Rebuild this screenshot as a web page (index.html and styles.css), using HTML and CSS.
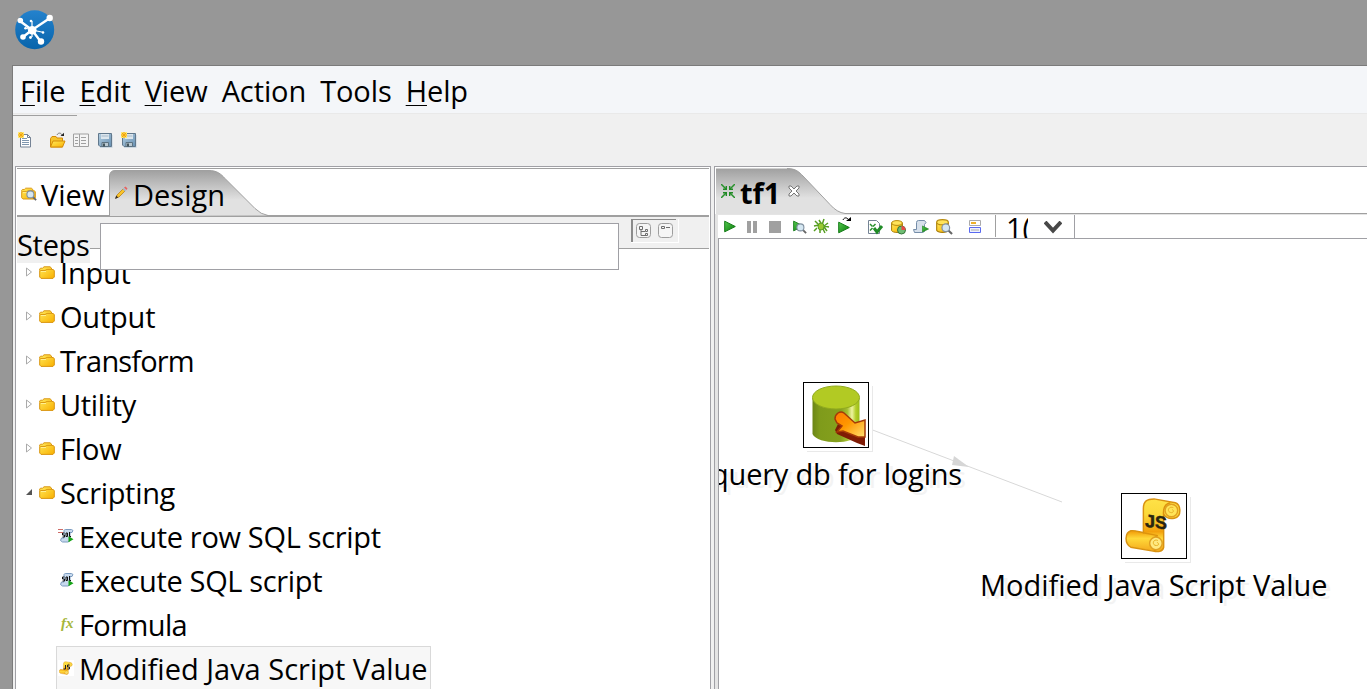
FILE: index.html
```html
<!DOCTYPE html>
<html lang="en">
<head>
<meta charset="utf-8">
<title>tf1</title>
<link rel="stylesheet" href="styles.css">
</head>
<body>
<svg class="defs" width="0" height="0">
  <defs>
    <linearGradient id="gold" x1="0" y1="0" x2="1" y2="1"><stop offset="0" stop-color="#ffe95a"/><stop offset="1" stop-color="#f9b000"/></linearGradient>
    <linearGradient id="green" x1="0" y1="0" x2="1" y2="1"><stop offset="0" stop-color="#55c94f"/><stop offset="1" stop-color="#087a0a"/></linearGradient>
    <linearGradient id="tab" x1="0" y1="0" x2="0" y2="1"><stop offset="0" stop-color="#a0a0a0"/><stop offset=".65" stop-color="#e1e1e1"/><stop offset="1" stop-color="#e1e1e1"/></linearGradient>
    <linearGradient id="barrel" x1="0" y1="0" x2="1" y2="0"><stop offset="0" stop-color="#6c8616"/><stop offset=".15" stop-color="#7f9b1b"/><stop offset=".6" stop-color="#85a01d"/><stop offset=".74" stop-color="#a5bf30"/><stop offset=".84" stop-color="#eef3a0"/><stop offset=".92" stop-color="#b3cf2a"/><stop offset="1" stop-color="#9aba17"/></linearGradient>
    <linearGradient id="fire" x1="0" y1="0" x2="1" y2="1"><stop offset="0" stop-color="#ff7800"/><stop offset=".45" stop-color="#ff9800"/><stop offset="1" stop-color="#ffe070"/></linearGradient>
    <linearGradient id="paper" x1="0" y1="0" x2="0" y2="1"><stop offset="0" stop-color="#ffe247"/><stop offset=".3" stop-color="#fbd93a"/><stop offset=".62" stop-color="#f3a00c"/><stop offset=".75" stop-color="#ffd93a"/><stop offset="1" stop-color="#f3a81c"/></linearGradient>
    <linearGradient id="blue" x1="0" y1="0" x2="0" y2="1"><stop offset="0" stop-color="#2482cd"/><stop offset="1" stop-color="#0864ab"/></linearGradient>
    <linearGradient id="steel" x1="0" y1="0" x2="1" y2="1"><stop offset="0" stop-color="#b4cfe2"/><stop offset="1" stop-color="#6790b2"/></linearGradient>
    <symbol id="folder" viewBox="0 0 16 13"><path d="M.7 4.500V3L1.500 2.200H3.500L5 .800H11L12.500 2V3.500H14L15.300 4.500V11l-1.300 1.400H2L.7 11Z" fill="url(#gold)" stroke="#d99511"/><path d="M1.300 4.500H6L8 3.400H12.500" fill="none" stroke="#dc9b12"/><path d="M2 5.500h5" stroke="#fff092"/></symbol>
    <symbol id="lens" viewBox="0 0 10 10"><path d="m6.200 6.200 3 3" stroke="#666" stroke-width="1.700"/><circle cx="4" cy="4" r="3.200" fill="#d5e7f2" stroke="#8090a0"/></symbol>
    <symbol id="play" viewBox="0 0 12 12"><path d="M.7.700v10.600L11.300 6Z" fill="url(#green)" stroke="#147c17"/></symbol>
    <symbol id="disk" viewBox="0 0 15 15"><path d="M2 2h12.500v12.800H2z" fill="#c4d2df"/><path d="M.5.500h13v13H2L.5 12Z" fill="url(#steel)" stroke="#61788c"/><path d="M3 1h8v5H3z" fill="#dce6ed"/><path d="M3.500 3h7" stroke="#a5b8c8"/><path d="M4 9.500h6.500v4H4z" fill="#b9c8d1" stroke="#5c7281"/><path d="M5 10.500h2v3H5z" fill="#44565e"/></symbol>
    <symbol id="spark" viewBox="0 0 6 6"><path d="M0 0h6v6H0z" fill="#ffe873"/><path d="M3 0v6M0 3h6M1 1l4 4M5 1 1 5" stroke="#f2a50c"/></symbol>
    <symbol id="barrelsm" viewBox="0 0 12 13"><path d="M.6 3v7.500c1 2.600 9.800 2.600 10.800 0V3Z" fill="url(#gold)" stroke="#a77b08"/><ellipse cx="6" cy="3" rx="5.400" ry="2.400" fill="#ffe45a" stroke="#b78a0c"/></symbol>
    <symbol id="sql" viewBox="0 0 16 14"><path d="M6 1.500C6.500.500 7 .500 8 .500h5.500l1.500 1-1 2h-2v8l-2 1.500H4.500L2.500 11.500 3.500 9H6Z" fill="#c7d9ed" stroke="#7c9cc0"/><path d="M6.500 4h-2v2h2v2h-2M8 4h1.500v3.500H8Zm3.500-1v4.500H13" fill="none" stroke="#111"/><path d="M10.500 7.300v6L15.500 10.300Z" fill="#15a315"/></symbol>
    <symbol id="scroll" viewBox="0 0 60 60"><path d="M19 13c0-8 4-10 11-10l22 4c6 2 7 15-1 16-5 1-9-1-11-4v34c-1 5-6 5-11 4L6 53C-1 49 0 38 6 36c3-1 8 1 13 2Z" fill="url(#paper)" stroke="#d99211" stroke-width="1.500"/><path d="M19 38 34 41M40 20c-1-9 2-12 7-13M34 41c-8 3-7 13-2 16" fill="none" stroke="#dd930c" stroke-width="1.500"/><circle cx="48" cy="15" r="6.500" fill="#ffe458" stroke="#e0a021" stroke-width="1.500"/><path d="M50 12c-5-2-7 4-3 5 3 1 4-2 2-3" fill="none" stroke="#e5ad22"/><circle cx="32" cy="49" r="6.500" fill="#ffe980" stroke="#e0a021" stroke-width="1.500"/><path d="M34 46c-5-2-6 4-3 5 4 1 5-2 2-3" fill="none" stroke="#e5ad22"/></symbol>
  </defs>
</svg>
<header class="title"><svg class="logo" width="42" height="42" viewBox="0 0 42 42"><circle cx="20.700" cy="20.700" r="19.500" fill="url(#blue)"/><path d="M6 12 18 21 36 9M18 21 9 28M18 21l9 12" fill="none" stroke="#fff" stroke-width="2.400"/><path d="M18 21V12M18 21v7M18 21l12 2.500M18 21l-7-2" stroke="#fff" stroke-width="1.200"/><g fill="#fff"><circle cx="6.300" cy="11.500" r="2.800"/><circle cx="35.700" cy="9" r="3.200"/><circle cx="9" cy="28" r="2.800"/><circle cx="27" cy="32.500" r="3.200"/><circle cx="18.300" cy="21.300" r="4.300"/><circle cx="17" cy="12" r="1.300"/><circle cx="16.500" cy="28.500" r="1.400"/><circle cx="29" cy="23.500" r="1.300"/><circle cx="11.500" cy="19.300" r="1.300"/></g></svg></header>
<main class="window">
  <nav class="menu"><span><u>F</u>ile</span><span><u>E</u>dit</span><span><u>V</u>iew</span><span>Action</span><span>Tools</span><span><u>H</u>elp</span></nav>
  <div class="rule"></div>
  <div class="toolbar">
    <svg width="16" height="16"><path d="M2.500 2.500h7l3 3v9.500h-10z" fill="#fff" stroke="#758395"/><path d="M9.500 2.500v3h3" fill="none" stroke="#758395"/><path d="M4 6.500h5M4 8.500h7M4 10.500h7M4 12.500h7" stroke="#7f97af"/><use href="#spark" width="6" height="6"/></svg>
    <svg class="open" width="17" height="16"><path d="M1.500 6.500 3 4.500h4l1 1.500h5.500v9h-12Z" fill="#f6c52d" stroke="#d58b09"/><path d="M4 9h12l-2.500 6H1.500Z" fill="url(#gold)" stroke="#d58b09"/><path d="M8 3c1-2.500 4-2.500 5 0" fill="none" stroke="#777"/><path d="M11.500 4H15V.800z" fill="#222"/></svg>
    <svg width="16" height="16"><path d="M.5 2h15v12.500H.5zM6.500 2v12M2 5.500h3M2 8.500h3M2 11.500h3M8 5.500h5M8 8.500h5M8 11.500h5" fill="#f4f4f4" stroke="#a0a0a0"/></svg>
    <svg width="16" height="16"><use href="#disk" x="1" y="1" width="15" height="15"/></svg>
    <svg width="16" height="16"><use href="#disk" x="1" y="1" width="15" height="15"/><use href="#spark" width="6" height="6"/></svg>
  </div>
  <div class="panes">
    <section class="left">
      <div class="tabs">
        <svg class="tabshape" width="162" height="46"><path d="M.5 46V6Q1 .500 6 .500H100C108 .500 112 4 116 8.500L146 38.500Q152 44.500 159 45.500H162" fill="url(#tab)" stroke="#a0a0a0"/></svg>
        <span class="tab view"><svg width="16" height="16"><use href="#folder" y="1" width="15" height="13"/><use href="#lens" x="5" y="4" width="11" height="11"/></svg><b>View</b></span>
        <span class="tab design"><svg width="14" height="14"><path d="m2 12 1-3 6-6 2 2-6 6Z" fill="#f9c42a" stroke="#b98219" stroke-width=".8"/><path d="m1 13 1.200-3.500 2 2Z" fill="#332b24"/><path d="m8.500 3 2.500 2.500 1.200-1.200L9.700 1.800Z" fill="#a9b8c8"/><path d="m10 1.500 2.500 2.500 1-1.500L11.500.500Z" fill="#e8625f"/></svg><b>Design</b></span>
      </div>
      <div class="filter"><span class="steps">Steps</span><span class="dash"></span><span class="search"></span>
        <span class="modes"><svg width="45" height="24"><path d="M0 .500h45M.500 23V0M1.500 23V1" fill="none" stroke="#8b8b8b"/><g fill="#f5f5f5" stroke="#9d9d9d"><rect x="5.500" y="4.500" width="14" height="14" rx="3"/><rect x="27.500" y="4.500" width="14" height="14" rx="3"/></g><path d="M8.500 7.500h3v3h-3zM10 11v5.500h5M10 12.500h4M14.500 10.500h2v2h-2zM14.500 14.500h2v2h-2zM30.500 7.500h3v2h-3zM35 8.500h4" fill="none" stroke="#6e6e6e"/></svg></span>
      </div>
      <div class="tree">
        <div class="row"><svg class="arrow" width="7" height="10"><path d="M.5 1v8l5-4Z" fill="#fff" stroke="#aaa"/></svg><svg class="fold" width="16" height="13"><use href="#folder"/></svg><span class="t1">Input</span></div>
        <div class="row"><svg class="arrow" width="7" height="10"><path d="M.5 1v8l5-4Z" fill="#fff" stroke="#aaa"/></svg><svg class="fold" width="16" height="13"><use href="#folder"/></svg><span class="t2">Output</span></div>
        <div class="row"><svg class="arrow" width="7" height="10"><path d="M.5 1v8l5-4Z" fill="#fff" stroke="#aaa"/></svg><svg class="fold" width="16" height="13"><use href="#folder"/></svg><span class="t3">Transform</span></div>
        <div class="row"><svg class="arrow" width="7" height="10"><path d="M.5 1v8l5-4Z" fill="#fff" stroke="#aaa"/></svg><svg class="fold" width="16" height="13"><use href="#folder"/></svg><span class="t4">Utility</span></div>
        <div class="row"><svg class="arrow" width="7" height="10"><path d="M.5 1v8l5-4Z" fill="#fff" stroke="#aaa"/></svg><svg class="fold" width="16" height="13"><use href="#folder"/></svg><span class="t5">Flow</span></div>
        <div class="row"><svg class="arrow" width="7" height="10"><path d="M0 8h6V2Z" fill="#555"/></svg><svg class="fold" width="16" height="13"><use href="#folder"/></svg><span class="t6">Scripting</span></div>
        <div class="row leaf"><svg width="16" height="16"><use href="#sql" y="1" width="16" height="14"/><path d="M0 1.500h5M0 4.500h5" stroke="#cf6c68"/></svg><span class="t7">Execute row SQL script</span></div>
        <div class="row leaf"><svg width="16" height="16"><use href="#sql" y="1" width="16" height="14"/></svg><span class="t8">Execute SQL script</span></div>
        <div class="row leaf"><svg width="16" height="16"><text class="fx" x="3" y="12">fx</text></svg><span class="t9">Formula</span></div>
        <div class="row leaf selected"><svg width="16" height="16"><path d="M0 0h16v16H0z" fill="#fff"/><use href="#scroll" x="1" y="1" width="14" height="14"/><path d="M7.500 5v4H5.500M11.500 5h-2v2h2v2h-2" fill="none" stroke="#222"/></svg><span class="t10">Modified Java Script Value</span></div>
      </div>
    </section>
    <section class="right">
      <div class="filetab"><svg class="fileshape" width="651" height="47"><path d="M0 46V.500H71C80 .500 83 4 87 8L114 36.500Q121 44.500 129 45.500H651" fill="url(#tab)"/><path d="M71 .500C80 .500 83 4 87 8L114 36.500Q121 44.500 129 45.500H651" fill="none" stroke="#a0a0a0"/></svg>
        <svg class="merge" width="14" height="14"><path d="m0 0 5 5M14 0 9 5M0 14l5-5M14 14 9 9" stroke="#28912c" stroke-width="1.500"/><path d="M5.300 2v3.300H2M8.700 2v3.300H12M5.300 12V8.700H2M8.700 12V8.700H12" fill="none" stroke="#228a26" stroke-width="1.400"/></svg><strong>tf1</strong><svg class="close" width="12" height="12"><path d="M1 1h2l3 3 3-3h2v2L8 6l3 3v2H9L6 8l-3 3H1V9l3-3-3-3Z" fill="#fff" stroke="#777"/></svg></div>
      <div class="runbar">
        <svg width="339" height="23">
          <use href="#play" x="6" y="5" width="12" height="13"/>
          <path d="M29 6h4v12h-4zm6 0h4v12h-4zM51 6h12v12H51z" fill="#a0a0a0"/>
          <use href="#play" x="75" y="5" width="11" height="12"/><use href="#lens" x="78" y="8" width="11" height="11"/>
          <path d="m97 6 4 4-5 1m14-3-4 3 5 1m-10-7 3 5 2-6m-7 9-3 3m10-4 3 4m-7-4v6m2-6 3 6" fill="none" stroke="#579e22" stroke-width="1.500"/><ellipse cx="103" cy="11.500" rx="3" ry="3.500" fill="#9ac832" stroke="#579e22"/>
          <use href="#play" x="120" y="6" width="12" height="13"/><path d="M125 5c1-3 5-3 6 1" fill="none" stroke="#111"/><path d="M128 6h5V2Z"/>
          <path d="M150.500 5.500h8l3 3v10h-11z" fill="#fff" stroke="#758395"/><path d="m152 9 2.500 2.500m3-2.500L155 11.500m-3 4 2.500-2.500" stroke="#28912c" stroke-width="1.500"/><path d="m156 13 3 4 5-6" fill="none" stroke="#218c27" stroke-width="3"/>
          <use href="#barrelsm" x="173" y="5" width="12" height="13"/><circle cx="183.500" cy="15" r="4" fill="#6fbd74" stroke="#36753a"/><path d="M183.500 15v-4a4 4 0 0 1 4 4Z" fill="#e84848"/>
          <path d="M198.500 7.500q0-2 2-2h6l1.500 2-1.500 2v7l-2 1h-8l-1-3h3Z" fill="#d7e0eb" stroke="#758da9"/><use href="#play" x="204" y="9" width="7" height="10"/>
          <use href="#barrelsm" x="218" y="4" width="13" height="14"/><use href="#lens" x="223" y="8" width="12" height="12"/>
          <path d="M251.500 5.500h11v5h-11z" fill="#fff" stroke="#aaa"/><path d="M253 8h5" stroke="#efb12b" stroke-width="2"/><path d="M251.500 12.500h11v5h-11z" fill="#eef2ff" stroke="#5969f0"/><path d="M253 15h8" stroke="#aaa"/>
          <path d="M277.500 0v22" stroke="#a0a0a0"/>
        </svg>
        <span class="zoom">1(</span><svg class="chev" width="18" height="14"><path d="m1 1 8 8.500L17 1" fill="none" stroke="#484848" stroke-width="4"/></svg>
      </div>
      <div class="canvas">
        <svg class="hop" width="200" height="80"><path d="M0 0 192 73" stroke="#d8d8d8"/><path d="m82 36 2-9 15 11Z" fill="#d6d6d6"/></svg>
        <div class="node db"><svg width="64" height="64" viewBox="0 0 64 64"><path d="M8.500 15v36c5 11 42 11 47 0V15Z" fill="url(#barrel)"/><ellipse cx="32" cy="14.500" rx="23.500" ry="11.500" fill="#b2ca23" stroke="#91aa1f"/><path d="M31 47 34 41 56 50 61 47V63L53 60 33 51Z" fill="#7f1b05"/><path d="M31 36c0-5 5-9 9-6l11 10 10-3v17l-7 0-15-6-6 1 5-6-5-3Z" fill="url(#fire)" stroke="#a53a07" stroke-width="1.500"/></svg></div>
        <span class="label dblabel">query db for logins</span>
        <div class="node js"><svg width="64" height="64"><use href="#scroll" x="3" y="2" width="58" height="58"/></svg><span class="jstext">JS</span></div>
        <span class="label jslabel">Modified Java Script Value</span>
      </div>
    </section>
  </div>
</main>
</body>
</html>
```
FILE: styles.css
```css
* { box-sizing: border-box; }
body { margin: 0; width: 1367px; height: 689px; overflow: hidden; background: #979797; color: #000; font: 29px/44px "Open Sans", sans-serif; display: flex; flex-direction: column; }
svg { display: block; flex: none; }
.defs { position: absolute; }
span, b { white-space: nowrap; }
.title { height: 65px; flex: none; padding: 9px 0 0 14px; }
.window { flex: 1; min-height: 0; margin-left: 12px; border-left: 1px solid #7b7b7b; border-top: 1px solid #7b7b7b; background: #f0f0f0; display: flex; flex-direction: column; }
.menu { height: 48px; flex: none; background: #f4f6f9; border-bottom: 1px solid #e9e9e9; padding: 3px 0 0 7px; display: flex; gap: 14px; letter-spacing: -.1px; }
.menu u { text-decoration-thickness: 1px; text-underline-offset: 3px; }
.rule { width: 64px; height: 3px; flex: none; border-bottom: 1px solid #a0a0a0; margin-top: -1px; }
.toolbar { height: 50px; flex: none; display: flex; gap: 8px; padding: 16px 0 0 5px; }
.open { margin-left: 7px; margin-right: -1px; }
.panes { flex: 1; min-height: 0; display: flex; gap: 3px; padding-left: 2px; }
.left { width: 696px; flex: none; border: solid #a0a0a5; border-width: 1px 1px 0; background: #fff; display: flex; flex-direction: column; padding: 1px 1px 0; }
.tabs { height: 49px; flex: none; border-top: 1px solid #a0a0a0; border-bottom: 2px solid #a0a0a0; position: relative; display: flex; }
.tabshape { position: absolute; left: 92px; top: 1px; }
.tab { position: relative; display: flex; padding-top: 4px; }
.tab b { font-weight: 400; }
.tab svg { margin-top: 13px; }
.view { padding-left: 4px; width: 97px; gap: 4px; }
.design { gap: 5px; }
.design svg { margin-top: 13px; }
.filter { height: 32px; flex: none; background: #f0f0f0; border-bottom: 1px solid #a0a0a0; display: flex; position: relative; z-index: 1; }
.steps { width: 73px; height: 46px; background: #f0f0f0; padding-top: 6px; letter-spacing: -.3px; }
.dash { width: 10px; }
.search { width: 519px; height: 47px; margin-top: 6px; background: #fff; border: 1px solid #a0a0a5; }
.modes { margin: 2px 0 0 12px; width: 48px; height: 24px; border: solid #fff; border-width: 0 1px 1px 0; }
.tree { flex: 1; min-height: 0; overflow: hidden; margin-top: 1px; padding-top: 1px; }
.row { height: 44px; display: flex; padding-left: 9px; }
.arrow { margin: 16px 6px 0 0; }
.fold { margin: 15px 5px 0 0; }
.leaf { margin-left: 39px; padding-left: 2px; }
.leaf svg { margin: 13px 5px 0 0; }
.selected { width: 375px; height: 46px; margin-top: -1px; border: 1px solid #d9d9d9; padding-left: 1px; background: #f7f7f7; }
.selected svg { margin-top: 13px; }
.t1, .t2, .t5 { letter-spacing: -.2px; }
.t3 { letter-spacing: -.85px; }
.t4, .t6, .t7 { letter-spacing: -.32px; }
.t8 { letter-spacing: -.35px; }
.t9 { letter-spacing: -.6px; }
.fx { font: italic bold 15px "Liberation Serif", serif; fill: #a5b63b; }
.right { flex: 1; min-width: 0; border: solid #a0a0a5; border-width: 1px 0 0 1px; background: #e4e4e4; display: flex; flex-direction: column; }
.filetab { height: 48px; flex: none; background: #fff; border-bottom: 1px solid #e4e4e4; position: relative; display: flex; padding-left: 6px; }
.fileshape { position: absolute; left: 1px; top: 1px; }
.merge { position: relative; margin-top: 17px; }
.filetab strong { position: relative; margin: 4px 8px 0 5px; }
.close { position: relative; margin-top: 18px; }
.runbar { height: 24px; flex: none; margin-left: 3px; background: #fff; border-bottom: 1px solid #a0a0a5; overflow: hidden; display: flex; }
.runbar > svg:first-child { margin-right: -51px; }
.zoom { width: 22px; overflow: hidden; line-height: 25px; }
.chev { margin: 6px 12px 0 16px; }
.runbar::after { content: ""; width: 1px; height: 23px; background: #a0a0a5; }
.canvas { flex: 1; min-height: 0; margin-left: 3px; border-left: 1px solid #a0a0a5; background: #fff; position: relative; overflow: hidden; }
.node { position: absolute; width: 66px; height: 66px; background: #fff; border: 1px solid #000; box-shadow: 3px 3px 0 #fff, 4px 4px 0 #e9e9e9; }
.db { left: 84px; top: 143px; }
.js { left: 402px; top: 254px; }
.hop { position: absolute; left: 151px; top: 190px; }
.label { position: absolute; text-shadow: 4px 3px 0 #f3f3f3; }
.dblabel { left: -8px; top: 213px; letter-spacing: -.2px; }
.jslabel { left: 261px; top: 324px; letter-spacing: -.04px; }
.jstext { position: absolute; left: 23px; top: 18px; font: bold 18px/20px "Liberation Sans", sans-serif; color: #292510; -webkit-text-stroke: .5px #292510; transform: skewY(7deg); }
```
